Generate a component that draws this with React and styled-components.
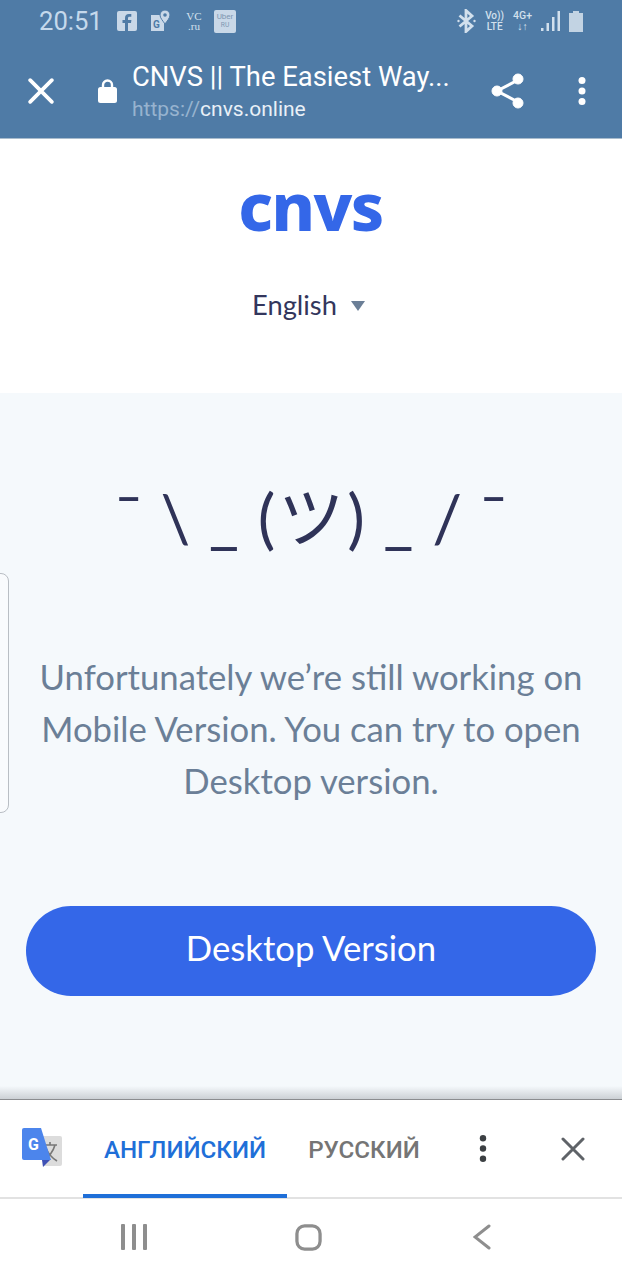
import React from 'react'
import styled, { createGlobalStyle } from 'styled-components'

const Global = createGlobalStyle`
  html, body { margin: 0; padding: 0; background: #fff; }
  * { box-sizing: border-box; }
`

const Phone = styled.div`
  width: 622px;
  height: 1280px;
  overflow: hidden;
  display: flex;
  flex-direction: column;
  position: relative;
  font-family: 'Lato', sans-serif;
`

const Chrome = styled.header`
  height: 139px;
  flex: none;
  background: #4f7ba6;
  border-bottom: 1px solid #a9bccd;
  font-family: 'Roboto', sans-serif;
  display: flex;
  flex-direction: column;
`

const StatusBar = styled.div`
  height: 46px;
  flex: none;
  display: flex;
  align-items: center;
  padding: 0 0 4px 39px;
  color: #c9dcee;
`

const Clock = styled.span`
  font-size: 25.6px;
  width: 78px;
  color: #c5d9ec;
`

const Notifs = styled.div`
  display: flex;
  align-items: center;
  gap: 14px;
`

const Tile = styled.div`
  width: 20px;
  height: 20px;
  background: #c9d8e8;
  border-radius: 2px;
`

const VcRu = styled.span`
  font-family: 'Liberation Serif', serif;
  font-size: 11px;
  line-height: 10px;
  text-align: center;
  color: #d5e2ee;
  width: 18px;
`

const UberTile = styled.div`
  width: 22px;
  height: 23px;
  margin-left: -3px;
  background: #c9d8e8;
  border-radius: 2px;
  color: #7e97b1;
  font-size: 8px;
  padding-top: 3px;
  text-align: center;
  line-height: 8px;
`

const StatusRight = styled.div`
  margin-left: auto;
  margin-right: 39px;
  display: flex;
  align-items: center;
  gap: 9px;
`

const TinyStack = styled.span`
  font-size: ${p => p.$size || 10}px;
  line-height: ${p => (p.$size || 10) + 1}px;
  font-weight: 500;
  text-align: center;
  color: #d2e0ed;
  display: flex;
  flex-direction: column;
`

const Toolbar = styled.div`
  flex: 1;
  display: flex;
  align-items: center;
  padding: 0 35px 3px 28px;
`

const LockIcon = styled.svg`
  margin-left: 44px;
  flex: none;
`

const TitleBlock = styled.div`
  margin-left: 15px;
  width: 332px;
  color: #fff;
`

const PageTitle = styled.div`
  font-size: 27.4px;
  line-height: 32px;
  white-space: nowrap;
`

const PageUrl = styled.div`
  font-size: 21px;
  line-height: 24px;
  margin-top: 4px;
  color: #e9f0f7;
  span { color: #97b3cf; }
`

const ToolIcons = styled.div`
  margin-left: auto;
  display: flex;
  align-items: center;
  gap: 52px;
`

const Masthead = styled.section`
  height: 254px;
  flex: none;
  background: #fff;
  display: flex;
  flex-direction: column;
  align-items: center;
`

const Logo = styled.div`
  font-family: 'Noto Sans', sans-serif;
  font-weight: 800;
  font-size: 66px;
  line-height: 80px;
  letter-spacing: -1.5px;
  color: #3467e8;
  margin-top: 26px;
  margin-right: 1px;
`

const Language = styled.div`
  margin-top: 43px;
  display: flex;
  align-items: center;
  gap: 14px;
  font-size: 27.3px;
  line-height: 34px;
  color: #33365c;
  padding-right: 5px;
`

const Caret = styled.span`
  width: 0;
  height: 0;
  border-left: 7.5px solid transparent;
  border-right: 7.5px solid transparent;
  border-top: 10px solid #6b7f97;
  margin-top: 2px;
`

const Panel = styled.main`
  height: 707px;
  flex: none;
  background: #f5f9fc;
  display: flex;
  flex-direction: column;
  align-items: center;
  position: relative;
`

const Shrug = styled.div`
  margin-top: 84px;
  font-family: 'Lato', 'Noto Sans CJK JP', sans-serif;
  font-size: 66px;
  line-height: 80px;
  letter-spacing: 18.5px;
  margin-right: -19px;
  white-space: nowrap;
  color: #2f3358;
`

const ShrugFace = styled.span`
  letter-spacing: 3px;
`

const Message = styled.p`
  margin: 94px 0 0;
  width: 570px;
  text-align: center;
  font-size: 34.7px;
  line-height: 52px;
  color: #6b7f97;
`

const DesktopButton = styled.button`
  margin-top: 99px;
  width: 570px;
  height: 90px;
  padding: 0 0 7px;
  border: 0;
  border-radius: 45px;
  background: #3467e8;
  color: #fff;
  font-family: inherit;
  font-size: 34.7px;
`

const SideTab = styled.div`
  position: absolute;
  left: -12px;
  top: 180px;
  width: 21px;
  height: 240px;
  border: 1px solid #b9bec4;
  border-radius: 8px;
  background: #f9fbfd;
`

const Fade = styled.div`
  position: absolute;
  left: 0;
  right: 0;
  bottom: 0;
  height: 14px;
  background: linear-gradient(to bottom, rgba(190, 195, 200, 0), rgba(190, 195, 200, 0.75));
  border-bottom: 1px solid #8b8d90;
`

const TranslateBar = styled.div`
  height: 99px;
  flex: none;
  background: #fff;
  border-bottom: 2px solid #e2e2e2;
  display: flex;
  align-items: stretch;
  font-family: 'Roboto', sans-serif;
  padding-left: 22px;
`

const TranslateLogo = styled.div`
  width: 61px;
  display: flex;
  align-items: center;
  flex: none;
  padding-bottom: 2px;
`

const Tab = styled.div`
  width: ${p => p.$w}px;
  flex: none;
  display: flex;
  align-items: center;
  justify-content: center;
  font-size: 24.2px;
  font-weight: 500;
  color: ${p => (p.$active ? '#1f6fd8' : '#757575')};
  border-bottom: 4px solid ${p => (p.$active ? '#1f6fd8' : 'transparent')};
  margin-bottom: -1px;
  padding-top: 6px;
`

const BarActions = styled.div`
  margin-left: auto;
  display: flex;
  align-items: center;
  padding: 0 37px 0 0;
  gap: 73px;
`

const NavBar = styled.nav`
  flex: 1;
  background: #fff;
  display: flex;
  align-items: center;
  justify-content: space-between;
  padding: 0 131px 5px 121px;
`

const HomeIcon = styled.svg`
  margin-left: -3px;
`

const CloseIcon = ({ size = 24, color = '#fff', width = 3.4 }) => (
  <svg width={size} height={size} viewBox="0 0 24 24" fill="none" stroke={color} strokeWidth={width} strokeLinecap="round">
    <path d="M2 2 22 22M22 2 2 22" />
  </svg>
)

const Dots = ({ color, h = 28, r = 3.5 }) => (
  <svg width="10" height={h} viewBox={`0 0 10 ${h}`} fill={color}>
    <circle cx="5" cy={r} r={r} />
    <circle cx="5" cy={h / 2} r={r} />
    <circle cx="5" cy={h - r} r={r} />
  </svg>
)

export default function App() {
  return (
    <Phone>
      <Global />
      <Chrome>
        <StatusBar>
          <Clock>20:51</Clock>
          <Notifs>
            <Tile>
              <svg width="20" height="20" viewBox="0 0 20 20">
                <path fill="#4f7ba6" d="M11 20v-8h3l.4-3H11V7.2c0-.9.3-1.5 1.500-1.500h1.800V3.100c-.4 0-1.400-.1-2.500-.1C9.500 3 8 4.400 8 6.900V9H5.500v3H8v8z" />
              </svg>
            </Tile>
            <svg width="20" height="22" viewBox="0 0 20 22">
              <path fill="#c9d8e8" d="M0 5h10l3 5v11H0z" />
              <path fill="#c9d8e8" stroke="#4f7ba6" d="M14 0a5 5 0 0 1 5 5c0 3-3 6-5 9-2-3-5-6-5-9a5 5 0 0 1 5-5z" />
              <circle cx="14" cy="5" r="1.800" fill="#4f7ba6" />
              <text x="2" y="18" fontSize="10" fontWeight="700" fill="#4f7ba6" fontFamily="Roboto, sans-serif">G</text>
            </svg>
            <VcRu>VC<br />.ru</VcRu>
            <UberTile>Uber<br /><small>RU</small></UberTile>
          </Notifs>
          <StatusRight>
            <svg width="19" height="24" viewBox="0 0 19 24" fill="none" stroke="#d2e0ed" strokeWidth="2.800">
              <path d="M2.500 6.500 15 17l-6 5.500V1.500L15 7 2.500 17.500" />
              <circle cx="1.500" cy="12" r="1.200" fill="#d2e0ed" stroke="none" />
              <circle cx="17.500" cy="12" r="1.200" fill="#d2e0ed" stroke="none" />
            </svg>
            <TinyStack>Vo))<span>LTE</span></TinyStack>
            <TinyStack $size={10.5}>4G+<span>↓↑</span></TinyStack>
            <svg width="19" height="20" viewBox="0 0 19 20" fill="#d2e0ed">
              <rect x="0" y="17" width="2.500" height="3" />
              <rect x="5.500" y="12" width="2.500" height="8" />
              <rect x="11" y="6" width="2.500" height="14" />
              <rect x="16.500" y="0" width="2.500" height="20" />
            </svg>
            <svg width="14" height="21" viewBox="0 0 14 21" fill="#c2d3e3">
              <path d="M4 0h6v2h4v19H0V2h4z" />
            </svg>
          </StatusRight>
        </StatusBar>
        <Toolbar>
          <CloseIcon size={26} />
          <LockIcon width="19" height="25" viewBox="0 0 19 25">
            <path fill="none" stroke="#fff" strokeWidth="2.400" d="M5 11V7a4.500 4.500 0 0 1 9 0v4" />
            <rect x="0" y="9" width="19" height="16" rx="2.500" fill="#fff" />
          </LockIcon>
          <TitleBlock>
            <PageTitle>CNVS || The Easiest Way...</PageTitle>
            <PageUrl><span>https://</span>cnvs.online</PageUrl>
          </TitleBlock>
          <ToolIcons>
            <svg width="34" height="36" viewBox="0 0 34 36" fill="#fff" stroke="#fff">
              <path fill="none" strokeWidth="3" d="M27 7 6 18l21 11" />
              <circle cx="27" cy="6" r="5" />
              <circle cx="6" cy="18" r="5" />
              <circle cx="27" cy="30" r="5" />
            </svg>
            <Dots color="#fff" />
          </ToolIcons>
        </Toolbar>
      </Chrome>
      <Masthead>
        <Logo>cnvs</Logo>
        <Language>English <Caret /></Language>
      </Masthead>
      <Panel>
        <SideTab />
        <Shrug>¯\_<ShrugFace>(ツ</ShrugFace>)_/¯</Shrug>
        <Message>Unfortunately we’re still working on Mobile Version. You can try to open Desktop version.</Message>
        <DesktopButton>Desktop Version</DesktopButton>
        <Fade />
      </Panel>
      <TranslateBar>
        <TranslateLogo>
          <svg width="40" height="40" viewBox="0 0 40 40">
            <path fill="#dcdcdc" d="M16 8h22a2 2 0 0 1 2 2v26a2 2 0 0 1-2 2H22z" />
            <path fill="none" stroke="#777" strokeWidth="1.600" d="M22 17h13M28 14v3M33 17c-2 7-6 12-12 15M24 20c2 5 6 10 11 13" />
            <path fill="#3f51b5" d="M20 32h8l-7 7z" />
            <path fill="#4c85ec" d="M2 0h17l10 32H2a2 2 0 0 1-2-2V2a2 2 0 0 1 2-2z" />
            <text x="6" y="22" fontSize="16" fontWeight="700" fill="#fff" fontFamily="Roboto, sans-serif">G</text>
          </svg>
        </TranslateLogo>
        <Tab $w={204} $active>АНГЛИЙСКИЙ</Tab>
        <Tab $w={154}>РУССКИЙ</Tab>
        <BarActions>
          <Dots color="#3c4043" h={27} r={3.2} />
          <CloseIcon size={24} color="#5f6368" width={3} />
        </BarActions>
      </TranslateBar>
      <NavBar>
        <svg width="26" height="26" viewBox="0 0 26 26" fill="#8e8e8e">
          <rect x="0" y="0" width="4" height="26" rx="1" />
          <rect x="11" y="0" width="4" height="26" rx="1" />
          <rect x="22" y="0" width="4" height="26" rx="1" />
        </svg>
        <HomeIcon width="27" height="27" viewBox="0 0 28 28" fill="none" stroke="#8e8e8e" strokeWidth="3.400">
          <rect x="2" y="2" width="24" height="24" rx="8" />
        </HomeIcon>
        <svg width="18" height="26" viewBox="0 0 18 26" fill="none" stroke="#8e8e8e" strokeWidth="3" strokeLinecap="round">
          <path d="M16 2 2 13l14 11" />
        </svg>
      </NavBar>
    </Phone>
  )
}
